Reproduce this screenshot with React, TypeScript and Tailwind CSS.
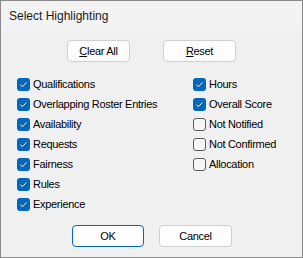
import React from "react";

const leftItems = [
    { label: "Qualifications", checked: true },
    { label: "Overlapping Roster Entries", checked: true },
    { label: "Availability", checked: true },
    { label: "Requests", checked: true },
    { label: "Fairness", checked: true },
    { label: "Rules", checked: true },
    { label: "Experience", checked: true },
];

const rightItems = [
    { label: "Hours", checked: true },
    { label: "Overall Score", checked: true },
    { label: "Not Notified", checked: false },
    { label: "Not Confirmed", checked: false },
    { label: "Allocation", checked: false },
];

function CheckRow({ label, checked }: { label: string; checked: boolean }) {
    return (
        <div className="h-[20px] flex items-center gap-[3px]">
            {checked ? (
                <span className="w-[13px] h-[13px] rounded-[3px] bg-[#0067c0] flex items-center justify-center">
                    <svg width="13" height="13" viewBox="0 0 13 13">
                        <path d="M3.5 6.8 L5.5 8.6 L9.5 4.4" fill="none" stroke="#ffffff" strokeWidth="1" />
                    </svg>
                </span>
            ) : (
                <span className="w-[13px] h-[13px] rounded-[3px] border border-[#5c5c5c] bg-[#f6f6f6]" />
            )}
            <span>{label}</span>
        </div>
    );
}

export default function App() {
    return (
        <div className="w-[303px] h-[258px] border border-[#8a8a8a] bg-[#f0f0f0] flex flex-col text-[11px] tracking-[-0.3px] text-black font-['Liberation_Sans',sans-serif] leading-none">
            {/* Title bar */}
            <div className="h-[30px] bg-[#f3f3f3] flex items-center pl-[8px] text-[12px] tracking-normal text-[#1a1a1a]">
                Select Highlighting
            </div>

            {/* Top buttons */}
            <div className="flex pt-[9px] pl-[66px] gap-[33px]">
                <button className="w-[63px] h-[22px] bg-[#fdfdfd] border border-[#d0d0d0] rounded-[4px] flex items-center justify-center">
                    <span><span className="underline">C</span>lear All</span>
                </button>
                <button className="w-[73px] h-[22px] bg-[#fdfdfd] border border-[#d0d0d0] rounded-[4px] flex items-center justify-center">
                    <span><span className="underline">R</span>eset</span>
                </button>
            </div>

            {/* Options */}
            <div className="flex pt-[12px] pl-[16px]">
                <div className="w-[176px] flex flex-col">
                    {leftItems.map((item) => (
                        <CheckRow key={item.label} label={item.label} checked={item.checked} />
                    ))}
                </div>
                <div className="flex flex-col">
                    {rightItems.map((item) => (
                        <CheckRow key={item.label} label={item.label} checked={item.checked} />
                    ))}
                </div>
            </div>

            {/* Bottom buttons */}
            <div className="flex pt-[11px] pl-[71px] gap-[15px]">
                <button className="w-[72px] h-[22px] bg-[#fdfdfd] border border-[#0067c0] rounded-[4px] flex items-center justify-center">
                    OK
                </button>
                <button className="w-[73px] h-[22px] bg-[#fdfdfd] border border-[#d0d0d0] rounded-[4px] flex items-center justify-center">
                    Cancel
                </button>
            </div>
        </div>
    );
}
